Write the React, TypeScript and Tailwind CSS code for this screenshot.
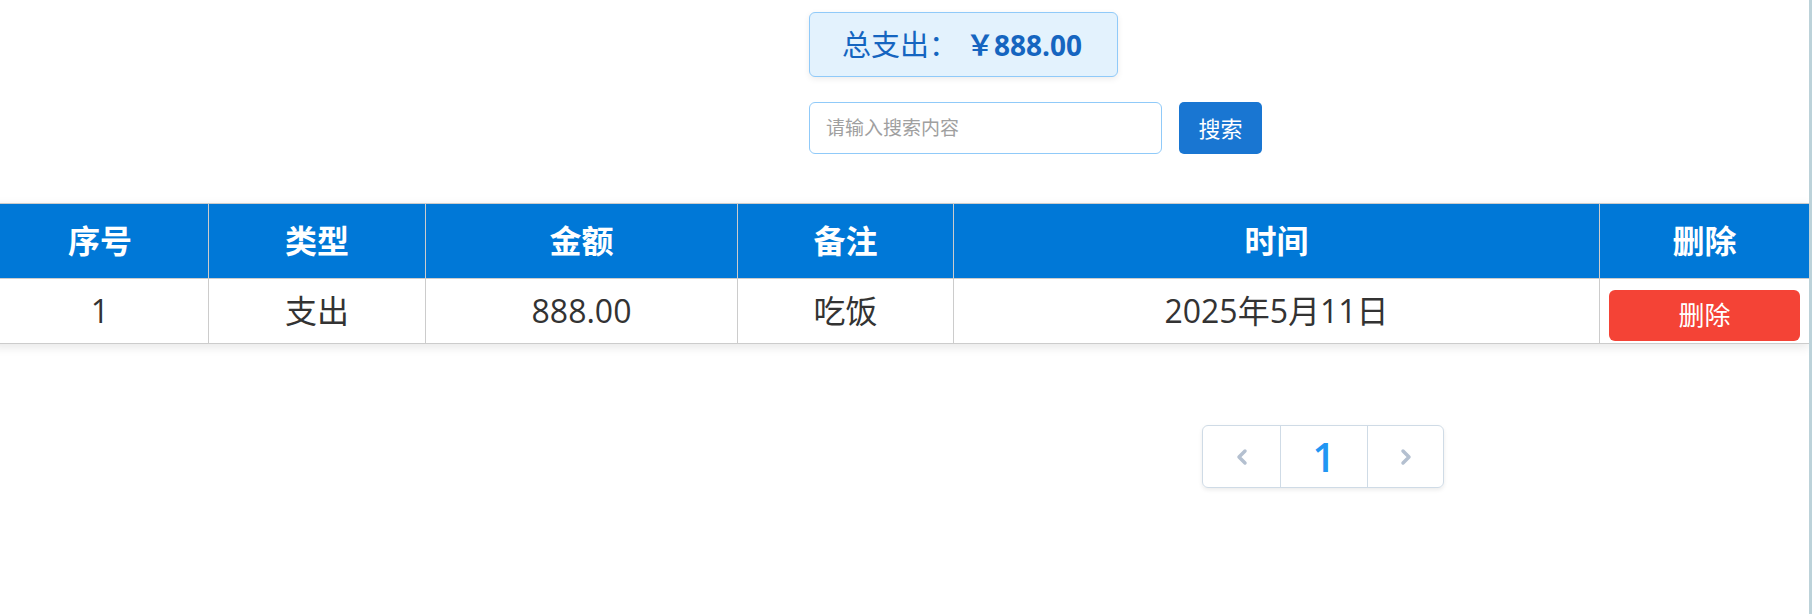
import { ChevronLeft, ChevronRight } from 'lucide-react';

type Record = {
    id: number;
    type: string;
    amount: string;
    note: string;
    time: string;
};

const records: Record[] = [
    { id: 1, type: '支出', amount: '888.00', note: '吃饭', time: '2025年5月11日' },
];

const columns = [
    { title: '序号', width: 'w-[217px]' },
    { title: '类型', width: 'w-[217px]' },
    { title: '金额', width: 'w-[312px]' },
    { title: '备注', width: 'w-[216px]' },
    { title: '时间', width: 'w-[646px]' },
    { title: '删除', width: 'w-[210px]' },
];

export default function App() {
    return (
        <div className="flex h-[614px] w-[1812px] bg-white font-['Open_Sans','Noto_Sans_CJK_SC',sans-serif] text-[#333]">
            <div className="w-[1809px] overflow-hidden">
                {/* 汇总 + 搜索 */}
                <div className="ml-[809px] pt-[12px]">
                    <div className="flex h-[65px] w-[309px] items-center rounded-[6px] border border-[#90caf9] bg-[#e3f2fd] pl-[32px] text-[28px] text-[#1565c0] shadow-[0_2px_6px_rgba(0,0,0,0.08)]">
                        <span className="text-[29px]">总支出：</span>
                        <span className="ml-[8px] font-bold">￥888.00</span>
                    </div>

                    <div className="mt-[25px] flex items-center">
                        <input
                            className="h-[52px] w-[353px] rounded-[6px] border border-[#90caf9] px-[16px] text-[19px] outline-none placeholder:text-[#a0a0a0]"
                            placeholder="请输入搜索内容"
                        />
                        <button className="ml-[17px] h-[52px] w-[83px] rounded-[5px] bg-[#1976d2] text-[22px] text-white">
                            搜索
                        </button>
                    </div>
                </div>

                {/* 表格 */}
                <div className="mt-[49px] -ml-[9px] w-[1818px] shadow-[0_3px_10px_rgba(0,0,0,0.10)]">
                    <table className="w-[1818px] table-fixed border-collapse border border-[#cccccc]">
                        <thead>
                            <tr className="h-[75px] bg-[#0078d7] text-white">
                                {columns.map((col) => (
                                    <th
                                        key={col.title}
                                        className={`${col.width} border border-[#cccccc] text-center text-[32px] font-bold`}
                                    >
                                        {col.title}
                                    </th>
                                ))}
                            </tr>
                        </thead>
                        <tbody>
                            {records.map((item) => (
                                <tr key={item.id} className="h-[65px] text-[32px]">
                                    <td className="border border-[#cccccc] text-center">{item.id}</td>
                                    <td className="border border-[#cccccc] text-center">{item.type}</td>
                                    <td className="border border-[#cccccc] text-center">{item.amount}</td>
                                    <td className="border border-[#cccccc] text-center">{item.note}</td>
                                    <td className="border border-[#cccccc] text-center">{item.time}</td>
                                    <td className="border border-[#cccccc] px-[9px] pt-[10px] pb-[2px] text-center">
                                        <button className="block h-[51px] w-full rounded-[6px] bg-[#f44336] text-[26px] text-white">
                                            删除
                                        </button>
                                    </td>
                                </tr>
                            ))}
                        </tbody>
                    </table>
                </div>

                {/* 分页 */}
                <div className="ml-[1202px] mt-[81px] flex h-[63px] w-[242px] overflow-hidden rounded-[6px] border border-[#cfdbe6] shadow-[0_2px_4px_rgba(0,0,0,0.08)]">
                    <div className="flex w-[77px] items-center justify-center text-[#b4c0d0]">
                        <ChevronLeft size={24} strokeWidth={3.5} />
                    </div>
                    <div className="flex w-[88px] items-center justify-center border-x border-[#cfdbe6] text-[40px] font-semibold text-[#2196f3]">
                        1
                    </div>
                    <div className="flex flex-1 items-center justify-center text-[#b4c0d0]">
                        <ChevronRight size={24} strokeWidth={3.5} />
                    </div>
                </div>
            </div>
            <div className="w-[3px] bg-[#bcd2d9]" />
        </div>
    );
}
